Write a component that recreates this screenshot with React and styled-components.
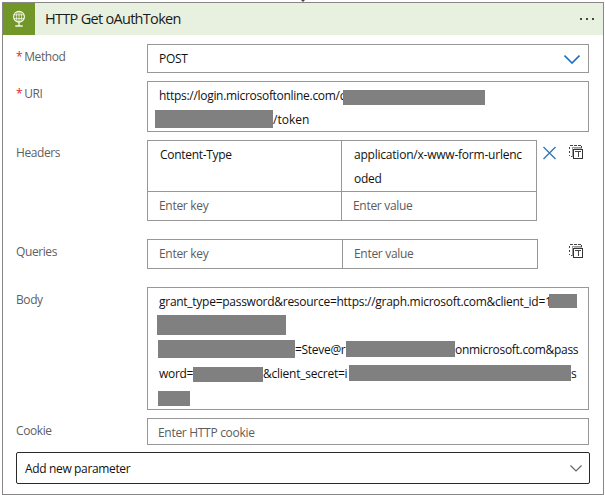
import React from 'react';
import styled, { createGlobalStyle } from 'styled-components';

const Global = createGlobalStyle`
  * { box-sizing: border-box; }
  body { margin: 0; background: #fff; font-family: "Open Sans", "Noto Sans", sans-serif; }
`;

const Page = styled.main`
  width: 605px;
  height: 495px;
  padding: 2px 1px 0 2px;
  position: relative;
  overflow: hidden;
`;
const FlowTip = styled.svg`
  position: absolute;
  left: 299px;
  top: 0;
`;
const Card = styled.section`
  height: 493px;
  border: 1px solid #8a8686;
  background: #fff;
`;
const Header = styled.header`
  display: flex;
  align-items: center;
  height: 32px;
  background: #e8f0df;
`;
const Badge = styled.div`
  width: 32px;
  height: 32px;
  background: #709727;
`;
const Title = styled.h1`
  flex: 1;
  margin: 0;
  padding-left: 10px;
  font-size: 14.5px;
  font-weight: 400;
  line-height: 32px;
  color: #1b1b1b;
  letter-spacing: -0.7px;
`;
const Dots = styled.div`
  display: flex;
  gap: 4px;
  padding: 0 9px 0 0;
  i { width: 2px; height: 2px; background: #444; }
`;
const Form = styled.div`
  display: flex;
  flex-direction: column;
  padding: 9px 14px 0 13px;
`;
const Row = styled.div`
  display: flex;
  align-items: flex-start;
  height: ${(p) => p.$h}px;
  margin-bottom: ${(p) => p.$gap}px;
`;
const Label = styled.label`
  width: 131px;
  margin-top: 3px;
  font-size: 12px;
  line-height: 20px;
  color: #5f5f5f;
  letter-spacing: -0.4px;
`;
const Required = styled.span`
  color: #e0252b;
  margin-right: 2px;
`;
const Box = styled.div`
  display: flex;
  flex-direction: column;
  width: 442px;
  height: 100%;
  padding: ${(p) => p.$pt || 0}px 0 0 ${(p) => p.$pl || 11}px;
  border: 1px solid #979797;
`;
const SelectBox = styled(Box)`
  flex-direction: row;
  justify-content: space-between;
  padding-right: 8px;
`;
const Line = styled.div`
  display: flex;
  height: 24px;
  white-space: nowrap;
`;
const Text = styled.span`
  font-size: 12px;
  line-height: ${(p) => p.$lh || 24}px;
  white-space: nowrap;
  color: ${(p) => (p.$muted ? '#5c5c5c' : '#111')};
  letter-spacing: ${(p) => p.$ls ?? -0.3}px;
  width: ${(p) => (p.$w ? `${p.$w}px` : 'auto')};
  flex: none;
`;
const Redaction = styled.span`
  flex: none;
  width: ${(p) => p.$w}px;
  height: ${(p) => p.$h}px;
  margin-top: ${(p) => p.$top || 0}px;
  margin-left: ${(p) => p.$left || 0}px;
  background: #808080;
`;
const Pairs = styled.div`
  display: grid;
  grid-template-columns: ${(p) => p.$cols};
  grid-template-rows: ${(p) => p.$rows};
  gap: 1px;
  padding: 1px;
  background: #979797;
`;
const Cell = styled.div`
  display: flex;
  flex-direction: column;
  background: #fff;
  padding: 2px 0 0 ${(p) => p.$pl || 11}px;
`;
const Actions = styled.div`
  display: flex;
  flex: 1;
  justify-content: flex-end;
  gap: 13px;
  padding: 5px 5px 0 0;
`;
const AddParameter = styled.div`
  display: flex;
  justify-content: space-between;
  width: 574px;
  height: 32px;
  padding: 0 7px 0 8px;
  border: 1px solid #292929;
  border-radius: 2px;
`;

const Globe = () => (
  <svg width="32" height="32" viewBox="0 0 32 32" fill="none" stroke="#f4f8e8" strokeWidth="0.8">
    <circle cx="16" cy="13.7" r="5.4" strokeWidth="1.2" />
    <ellipse cx="16" cy="13.7" rx="2.6" ry="5.2" />
    <path d="M10.8 11.8h10.4M10.8 15.6h10.4M16 8.5v10.5" />
    <path d="M16 19v3.5M12.3 23h7.4" strokeWidth="1.3" />
  </svg>
);
const Chevron = ({ color, w, h, top, sw }) => (
  <svg width={w} height={h + top} fill="none" stroke={color} strokeWidth={sw}>
    <path d={`M0.5 ${top + 0.5}L${w / 2} ${top + h - 1}L${w - 0.5} ${top + 0.5}`} />
  </svg>
);
const Close = () => (
  <svg width="13" height="15" fill="none" stroke="#3474b8" strokeWidth="1.3">
    <path d="M.5 2L12.5 14M12.5 2L.5 14" />
  </svg>
);
const TextMode = () => (
  <svg width="15" height="15" fill="none" shapeRendering="crispEdges">
    <path d="M1 .5h3M5 .5h3M9 .5h3M.5 2v2M.5 6v2M.5 10v1M2 11.5h1M12.5 1v2" stroke="#444" />
    <path d="M3.5 12V2.5H12" stroke="#999" />
    <rect x="4.5" y="4.5" width="9" height="9" fill="#fff" stroke="#333" />
    <path d="M5 3.5h8" stroke="#bbb" />
    <path d="M6 6.5h6M9 6v6" stroke="#444" />
  </svg>
);

export default function App() {
  return (
    <Page>
      <Global />
      <FlowTip width="8" height="2"><path d="M2 0h4L4 2z" fill="#444" /></FlowTip>
      <Card>
        <Header>
          <Badge><Globe /></Badge>
          <Title>HTTP Get oAuthToken</Title>
          <Dots><i /><i /><i /></Dots>
        </Header>
        <Form>
          <Row $h={29} $gap={8}>
            <Label><Required>*</Required>Method</Label>
            <SelectBox>
              <Text $lh={28}>POST</Text>
              <Chevron color="#1a6fc4" w={16} h={9} top={10} sw={1.6} />
            </SelectBox>
          </Row>
          <Row $h={51} $gap={8}>
            <Label><Required>*</Required>URI</Label>
            <Box $pt={2}>
              <Line>
                <Text $w={184}>https://login.microsoftonline.com/c</Text>
                <Redaction $w={142} $h={15} $top={6} />
              </Line>
              <Line>
                <Redaction $w={118} $h={18} $top={2} $left={-4} />
                <Text $ls={0}>/token</Text>
              </Line>
            </Box>
          </Row>
          <Row $h={81} $gap={18}>
            <Label>Headers</Label>
            <Pairs $cols="193px 194px" $rows="50px 28px">
              <Cell $pl={12}><Text>Content-Type</Text></Cell>
              <Cell $pl={12}><Text $ls={-0.22}>application/x-www-form-urlenc</Text><Text>oded</Text></Cell>
              <Cell><Text $muted>Enter key</Text></Cell>
              <Cell><Text $muted>Enter value</Text></Cell>
            </Pairs>
            <Actions><Close /><TextMode /></Actions>
          </Row>
          <Row $h={30} $gap={18}>
            <Label>Queries</Label>
            <Pairs $cols="194px 194px" $rows="28px">
              <Cell><Text $muted>Enter key</Text></Cell>
              <Cell><Text $muted>Enter value</Text></Cell>
            </Pairs>
            <Actions><TextMode /></Actions>
          </Row>
          <Row $h={123} $gap={8}>
            <Label>Body</Label>
            <Box $pt={2}>
              <Line>
                <Text $w={390} $ls={-0.27}>grant_type=password&amp;resource=https://graph.microsoft.com&amp;client_id=1</Text>
                <Redaction $w={28} $h={14} $top={4} />
              </Line>
              <Line><Redaction $w={129} $h={20} $top={1} $left={-2} /></Line>
              <Line>
                <Redaction $w={137} $h={18} $top={2} $left={-1} />
                <Text $w={51}>=Steve@r</Text>
                <Redaction $w={109} $h={16} $top={3} />
                <Text>onmicrosoft.com&amp;pass</Text>
              </Line>
              <Line>
                <Text $w={34}>word=</Text>
                <Redaction $w={70} $h={15} $top={5} />
                <Text $w={86} $ls={-0.24}>&amp;client_secret=i</Text>
                <Redaction $w={222} $h={16} $top={3} />
                <Text $ls={0}>s</Text>
              </Line>
              <Line><Redaction $w={32} $h={15} $top={5} $left={-1} /></Line>
            </Box>
          </Row>
          <Row $h={27} $gap={7}>
            <Label>Cookie</Label>
            <Box $pl={10}><Text $muted $lh={28}>Enter HTTP cookie</Text></Box>
          </Row>
          <AddParameter>
            <Text $lh={32} $ls={-0.35}>Add new parameter</Text>
            <Chevron color="#666" w={12} h={7} top={12} sw={1.2} />
          </AddParameter>
        </Form>
      </Card>
    </Page>
  );
}
